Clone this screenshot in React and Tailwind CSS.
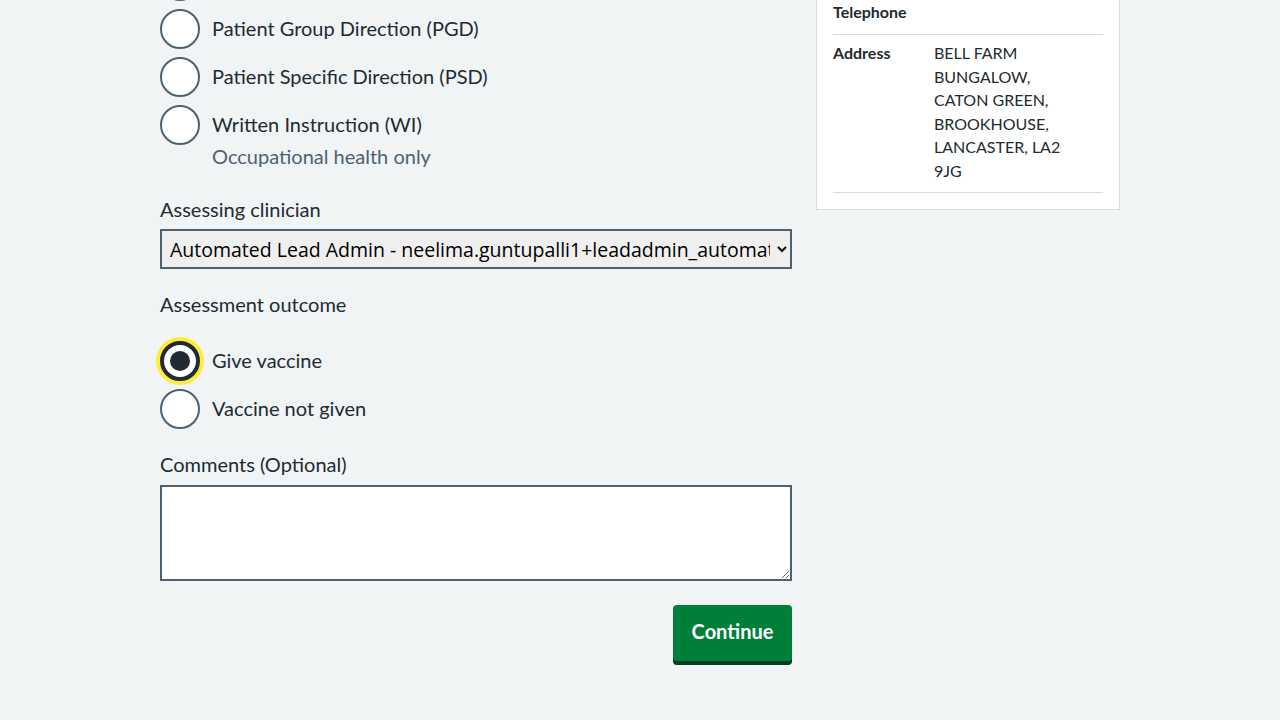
import React from "react";

function Radio({ label, hint, checked, focused }) {
  return (
    <div className="flex mb-2 last:mb-0">
      {checked ? (
        <div
          className={`w-10 h-10 shrink-0 rounded-full bg-white border-4 border-[#212b32] flex items-center justify-center ${
            focused ? "shadow-[0_0_0_4px_#ffeb3b]" : ""
          }`}
        >
          <div className="w-5 h-5 rounded-full bg-[#212b32]" />
        </div>
      ) : (
        <div className="w-10 h-10 shrink-0 rounded-full bg-white border-2 border-[#4c6272]" />
      )}
      <div className="pl-3 pt-[5px]">
        <div className="text-[20px] leading-[28px] text-[#212b32]">{label}</div>
        {hint && (
          <div className="text-[20px] leading-[28px] text-[#4c6272] mt-1">{hint}</div>
        )}
      </div>
    </div>
  );
}

export default function App() {
  return (
    <div className="min-h-screen bg-[#f0f4f5] font-['Lato',sans-serif] overflow-hidden">
      <div className="w-[960px] mx-auto flex gap-6">
        <div className="w-[632px] shrink-0 mt-[-39px]">
          <div className="mb-[25px]">
            {/* previous option, scrolled out of view */}
            <Radio label="" />
            <Radio label="Patient Group Direction (PGD)" />
            <Radio label="Patient Specific Direction (PSD)" />
            <Radio label="Written Instruction (WI)" hint="Occupational health only" />
          </div>

          <label className="block text-[20px] leading-[28px] text-[#212b32] mb-[6px]">
            Assessing clinician
          </label>
          <select className="block w-full h-10 border-2 border-[#4c6272] bg-[#efefef] text-black text-[19.5px] pl-1 pr-1 font-['Open_Sans',sans-serif]">
            <option>Automated Lead Admin - neelima.guntupalli1+leadadmin_automation@nhs.net</option>
          </select>

          <div className="mt-[21px] text-[20px] leading-[28px] text-[#212b32] mb-[23px]">
            Assessment outcome
          </div>
          <div>
            <Radio label="Give vaccine" checked focused />
            <Radio label="Vaccine not given" />
          </div>

          <label className="block mt-[21px] text-[20px] leading-[28px] text-[#212b32] mb-[7px]">
            Comments (Optional)
          </label>
          <textarea className="block w-full h-24 border-2 border-[#4c6272] bg-white" />

          <div className="flex justify-end mt-6">
            <button
              type="button"
              className="h-14 w-[119px] rounded bg-[#007f3b] text-white font-bold text-[20px] leading-[28px] pb-1 shadow-[0_4px_0_#00401e]"
            >
              Continue
            </button>
          </div>
        </div>

        <div className="w-[304px] shrink-0 self-start bg-white border border-[#d8dde0] mt-[-7px] px-4 pb-4">
          <div className="flex border-b border-[#d8dde0] pt-[6px] pb-[10px] text-[16px] leading-[24px] text-[#212b32]">
            <div className="w-[101px] shrink-0 font-bold">Telephone</div>
            <div className="w-[135px]"></div>
          </div>
          <div className="flex border-b border-[#d8dde0] pt-[6px] pb-[10px] text-[16px] leading-[23.5px] text-[#212b32]">
            <div className="w-[101px] shrink-0 font-bold">Address</div>
            <div className="w-[135px]">
              BELL FARM
              <br />
              BUNGALOW,
              <br />
              CATON GREEN,
              <br />
              BROOKHOUSE,
              <br />
              LANCASTER, LA2
              <br />
              9JG
            </div>
          </div>
        </div>
      </div>
    </div>
  );
}
